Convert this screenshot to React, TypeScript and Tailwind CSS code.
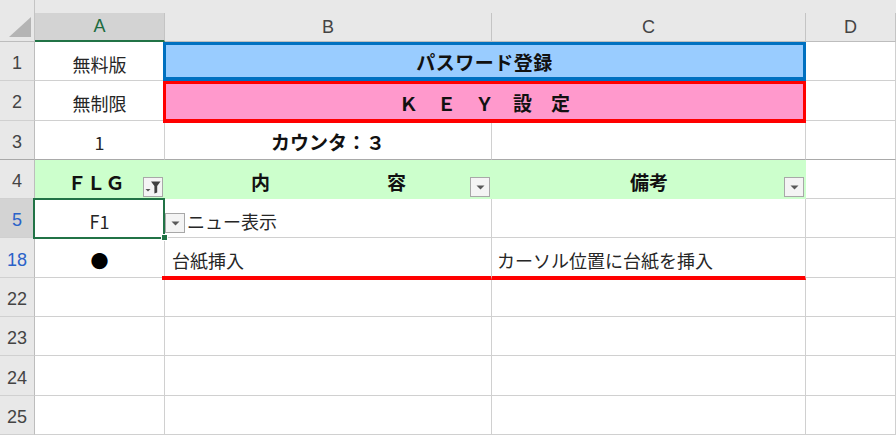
import type { ReactNode } from "react";

type CellProps = {
  className?: string;
  children?: ReactNode;
};

// plain worksheet cell with the light gridlines on its right and bottom
function Cell({ className = "", children }: CellProps) {
  return (
    <div
      className={`relative flex items-center border-r border-r-[#d0d0d0] pt-[6px] ${className}`}
    >
      {children}
    </div>
  );
}

function ColHeader({ label, active = false }: { label: string; active?: boolean }) {
  return (
    <div className="flex flex-col bg-[#e8e8e8] pt-[13px]">
      {active ? (
        <div className="flex flex-1 items-center justify-center border-r border-r-[#c4c4c4] border-b-2 border-b-[#217346] bg-[#d3d3d3] text-[#1d6b40]">
          {label}
        </div>
      ) : (
        <div className="flex flex-1 items-center justify-center border-r border-r-[#c4c4c4] border-b border-b-[#bdbdbd] text-[#444]">
          {label}
        </div>
      )}
    </div>
  );
}

function RowHeader({
  n,
  filtered = false,
  selected = false,
  bottom = "border-b-[#d0d0d0]",
}: {
  n: string;
  filtered?: boolean;
  selected?: boolean;
  bottom?: string;
}) {
  return (
    <div
      className={`flex items-center justify-center border-b border-r border-r-[#bdbdbd] pt-[5px] font-['Liberation_Sans',Arial,sans-serif] text-[18px] ${bottom} ${
        selected ? "bg-[#d3d3d3]" : "bg-[#e8e8e8]"
      } ${filtered ? "text-[#2a62c9]" : "text-[#444]"}`}
    >
      {n}
    </div>
  );
}

function DropArrow() {
  return (
    <svg width="9" height="5" viewBox="0 0 9 5">
      <polygon points="0.5,0.5 8.5,0.5 4.5,4.5" fill="#595959" />
    </svg>
  );
}

function FilterButton({ filtered = false }: { filtered?: boolean }) {
  return (
    <span className="absolute bottom-[2px] right-[2px] flex h-[20px] w-[20px] items-center justify-center border border-[#a8a8a8] bg-[#f4f4f4]">
      {filtered ? (
        <svg width="16" height="14" viewBox="0 0 16 14">
          <polygon points="0.5,9 5.5,9 3,11.5" fill="#555" />
          <path d="M6 1.5 H15.5 L12.2 6 V12.5 L9.4 13.5 V6 Z" fill="#404040" />
        </svg>
      ) : (
        <DropArrow />
      )}
    </span>
  );
}

const blank = "border-b border-b-[#d0d0d0]";

export default function App() {
  return (
    <div className="h-[436px] w-[896px] overflow-hidden bg-white font-['Noto_Sans_CJK_JP','Noto_Sans',sans-serif] text-[18px] text-[#262626]">
      <div className="grid grid-cols-[35px_130px_327px_314px_90px] grid-rows-[42px_repeat(10,39.3px)]">
        {/* column headers */}
        <div className="flex items-end justify-end border-r border-r-[#c4c4c4] border-b border-b-[#bdbdbd] bg-[#e8e8e8] pb-[4px] pr-[3px]">
          <svg width="22" height="20" viewBox="0 0 22 20">
            <polygon points="22,0 22,20 0,20" fill="#b4b4b4" />
          </svg>
        </div>
        <div className="contents font-['Liberation_Sans',Arial,sans-serif] text-[18px]">
          <ColHeader label="A" active />
          <ColHeader label="B" />
          <ColHeader label="C" />
          <ColHeader label="D" />
        </div>

        {/* row 1 */}
        <RowHeader n="1" />
        <Cell className={`justify-center ${blank}`}>無料版</Cell>
        <div className="relative z-10 col-span-2 ml-[-2px] flex items-center justify-center border-[3px] border-b-[4px] border-[#0070c0] bg-[#99ccff] pt-[3px] text-[19px] font-bold tracking-[0.5px] text-[#111]">
          パスワード登録
        </div>
        <Cell className={blank} />

        {/* row 2 */}
        <RowHeader n="2" />
        <Cell className={`justify-center ${blank}`}>無制限</Cell>
        <div className="relative z-10 col-span-2 ml-[-2px] mb-[-2px] flex items-center justify-center border-[3px] border-b-[4px] border-[#ff0000] bg-[#ff99cc] pt-[3px] text-[19px] font-bold text-[#111]">
          Ｋ　Ｅ　Ｙ　設　定
        </div>
        <Cell className={blank} />

        {/* row 3 – frozen pane edge below */}
        <RowHeader n="3" bottom="border-b-[#a9a9a9]" />
        <Cell className="justify-center border-b border-b-[#a9a9a9]">1</Cell>
        <Cell className="justify-center border-b border-b-[#a9a9a9] text-[19px] font-bold text-[#111]">
          カウンタ：３
        </Cell>
        <Cell className="border-b border-b-[#a9a9a9]" />
        <Cell className="border-b border-b-[#a9a9a9]" />

        {/* row 4 – table header with filters */}
        <RowHeader n="4" />
        <div className="relative flex items-center justify-center bg-[#ccffcc] pr-[8px] pt-[5px] text-[19px] font-bold text-[#111]">
          ＦＬＧ
          <FilterButton filtered />
        </div>
        <div className="relative flex items-center justify-between bg-[#ccffcc] px-[86px] pt-[5px] text-[19px] font-bold text-[#111]">
          <span>内</span>
          <span>容</span>
          <FilterButton />
        </div>
        <div className="relative flex items-center justify-center bg-[#ccffcc] pt-[5px] text-[19px] font-bold text-[#111]">
          備考
          <FilterButton />
        </div>
        <Cell className={blank} />

        {/* row 5 – active cell */}
        <RowHeader n="5" filtered selected />
        <Cell className={`justify-center ${blank}`}>
          F1
          <span className="pointer-events-none absolute bottom-[-2px] left-[-2px] right-[-1px] top-[-1px] z-20 border-2 border-[#217346]" />
          <span className="absolute bottom-[-4px] right-[-4px] z-30 h-[7px] w-[7px] border border-white bg-[#217346]" />
          <span className="absolute left-[calc(100%+1px)] top-[14px] z-30 flex h-[20px] w-[20px] items-center justify-center border border-[#a8a8a8] bg-[#f4f4f4]">
            <DropArrow />
          </span>
        </Cell>
        <Cell className={`pl-[4px] ${blank}`}>メニュー表示</Cell>
        <Cell className={blank} />
        <Cell className={blank} />

        {/* row 18 */}
        <RowHeader n="18" filtered />
        <Cell className={`justify-center text-[18px] text-[#000] ${blank}`}>●</Cell>
        <Cell className="z-10 mb-[-2px] ml-[-3px] border-b-[4px] border-b-[#ff0000] pl-[10px]">台紙挿入</Cell>
        <Cell className="z-10 mb-[-2px] border-b-[4px] border-b-[#ff0000] pl-[5px]">
          カーソル位置に台紙を挿入
        </Cell>
        <Cell className={blank} />

        {/* empty rows */}
        {["22", "23", "24", "25"].map((n) => (
          <div key={n} className="contents">
            <RowHeader n={n} />
            <Cell className={blank} />
            <Cell className={blank} />
            <Cell className={blank} />
            <Cell className={blank} />
          </div>
        ))}
      </div>
    </div>
  );
}
